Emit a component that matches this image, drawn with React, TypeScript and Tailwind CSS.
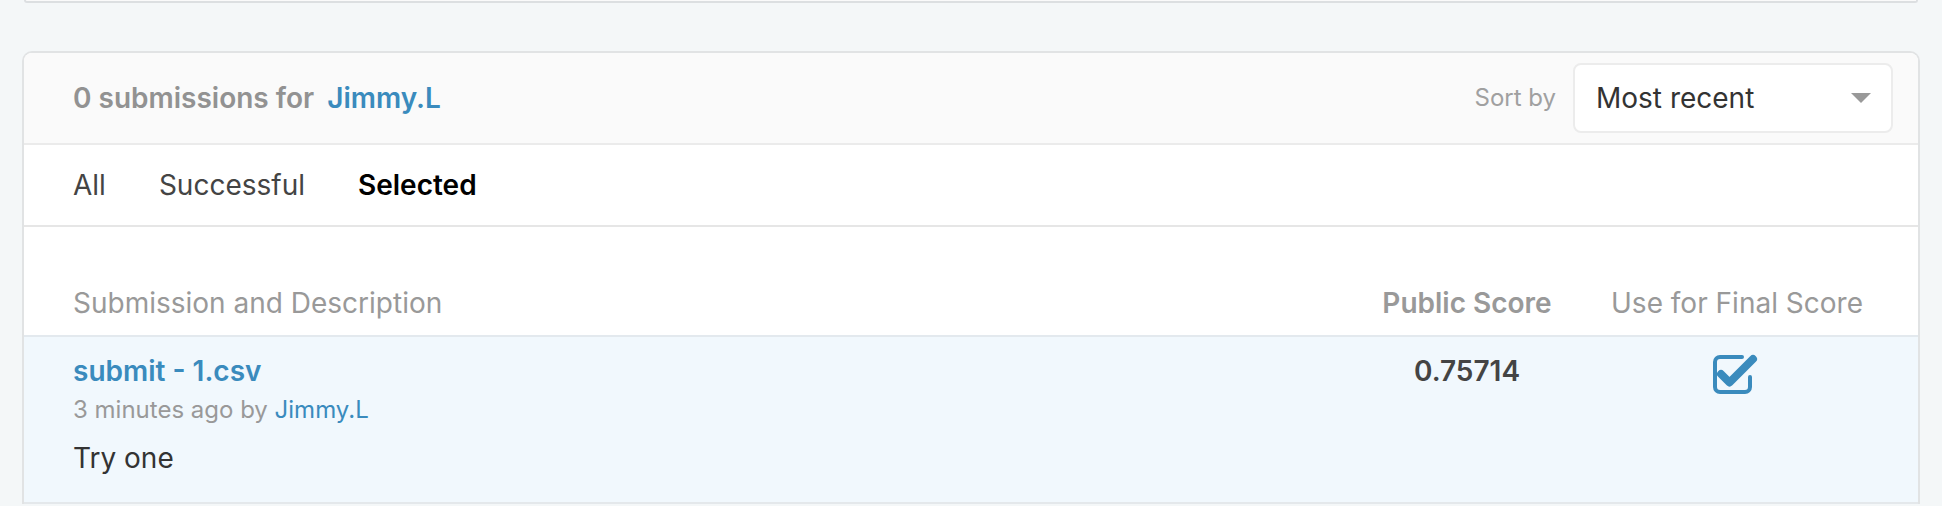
import { useState } from 'react';

function CheckSquare() {
    return (
        <svg width="46" height="42" viewBox="0 0 46 42" fill="none">
            <path
                d="M30 4 H8 A5 5 0 0 0 3 9 V34 A5 5 0 0 0 8 39 H33 A5 5 0 0 0 38 34 V24"
                stroke="#3a8bbd"
                strokeWidth="4"
                strokeLinecap="round"
            />
            <path
                d="M9 21 L17.5 29.5 L41 6"
                stroke="#3a8bbd"
                strokeWidth="8"
                strokeLinejoin="round"
                strokeLinecap="round"
            />
        </svg>
    );
}

const tabs = ['All', 'Successful', 'Selected'];

export default function App() {
    const [tab, setTab] = useState('Selected');

    return (
        <div className="min-h-screen bg-[#f4f7f8] px-[22px] font-['Inter',sans-serif]">
            {/* bottom edge of the card above */}
            <div className="h-[3px] mx-[2px] rounded-b-lg border-2 border-t-0 border-[#dcdfe1] bg-[#fafafa]" />

            <div className="mt-[48px] rounded-t-[10px] border-2 border-b-0 border-[#e1e3e4] bg-white overflow-hidden">
                {/* Header */}
                <div className="h-[92px] flex items-center justify-between pl-[49px] pr-[25px] bg-[#fafafa] border-b-2 border-[#ebebeb]">
                    <div className="text-[28px] font-semibold text-[#929292]">
                        0 submissions for <a href="#" className="ml-[6px] text-[#3a8bbd]">Jimmy.L</a>
                    </div>
                    <div className="flex items-center gap-[17px]">
                        <span className="text-[24px] text-[#a0a0a0]">Sort by</span>
                        <button className="w-[320px] h-[70px] flex items-center justify-between pl-[21px] pr-[20px] rounded-[8px] border-2 border-[#ececec] bg-white">
                            <span className="text-[28px] text-[#333]">Most recent</span>
                            <span className="w-0 h-0 border-x-[10px] border-x-transparent border-t-[10px] border-t-[#999]" />
                        </button>
                    </div>
                </div>

                {/* Tabs */}
                <div className="h-[82px] flex items-center gap-[53px] pl-[49px] border-b-2 border-[#e6e6e6]">
                    {tabs.map((t) => (
                        <button
                            key={t}
                            onClick={() => setTab(t)}
                            className={t === tab ? 'text-[28px] font-semibold text-black' : 'text-[28px] text-[#444]'}
                        >
                            {t}
                        </button>
                    ))}
                </div>

                {/* Table header */}
                <div className="h-[110px] grid grid-cols-[1fr_220px_320px] items-end pb-[11px] pl-[49px] pr-[21px] border-b-2 border-[#e3e9ee]">
                    <span className="text-[28px] text-[#999]">Submission and Description</span>
                    <span className="text-[28px] font-semibold text-[#999] text-center">Public Score</span>
                    <span className="text-[28px] text-[#999] text-center">Use for Final Score</span>
                </div>

                {/* Row */}
                <div className="grid grid-cols-[1fr_220px_320px] pt-[16px] pb-[26px] pl-[49px] pr-[21px] bg-[#f1f8fd] border-b-2 border-[#e4e8eb]">
                    <div className="flex flex-col">
                        <a href="#" className="text-[28px] leading-[36px] font-semibold text-[#3a8bbd]">submit - 1.csv</a>
                        <span className="mt-[3px] text-[24px] leading-[36px] text-[#999]">
                            3 minutes ago by <a href="#" className="text-[#3a8bbd]">Jimmy.L</a>
                        </span>
                        <span className="mt-[12px] text-[28px] leading-[36px] text-[#333]">Try one</span>
                    </div>
                    <div className="text-center text-[28px] leading-[36px] font-semibold text-[#444]">0.75714</div>
                    <div className="flex justify-center pr-[4px]">
                        <CheckSquare />
                    </div>
                </div>
            </div>
        </div>
    );
}
